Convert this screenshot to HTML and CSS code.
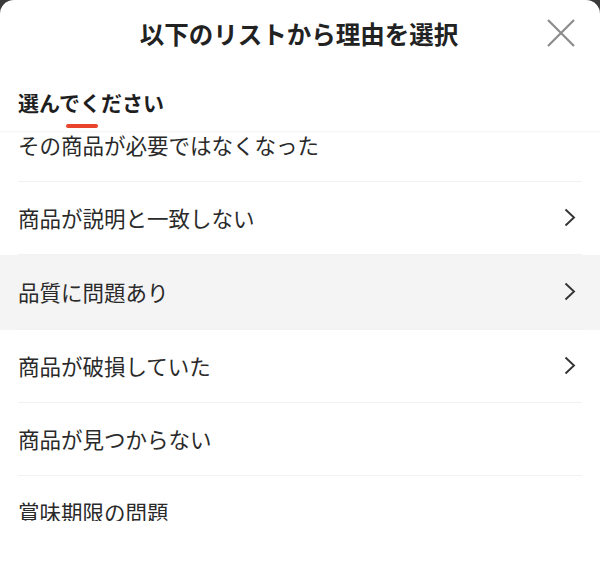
FILE: index.html
```
<html>

<head>
    <meta charset="UTF-8">
    <meta name="viewport" content="width=device-width, initial-scale=1.0">
    <link rel="stylesheet" href="styles.css">
</head>

<body>
    <div class="sheet">
        <div class="header">
            <div class="title">以下のリストから理由を選択</div>
            <span class="close">
                <svg width="30" height="30" viewBox="0 0 30 30">
                    <path d="M2 2 L28 28 M28 2 L2 28" stroke="#8c8c8c" stroke-width="2.2" fill="none" />
                </svg>
            </span>
        </div>
        <div class="tabs">
            <div class="tab active">選んでください</div>
        </div>
        <div class="list-wrap">
            <ul class="reasons">
                <li>その商品が必要ではなくなった</li>
                <li>商品が説明と一致しない
                    <svg class="chevron" width="12" height="19" viewBox="0 0 12 19">
                        <path d="M1.5 1.5 L10 9.5 L1.5 17.5" stroke="#333" stroke-width="1.9" fill="none" />
                    </svg>
                </li>
                <li class="hover">品質に問題あり
                    <svg class="chevron" width="12" height="19" viewBox="0 0 12 19">
                        <path d="M1.5 1.5 L10 9.5 L1.5 17.5" stroke="#333" stroke-width="1.9" fill="none" />
                    </svg>
                </li>
                <li>商品が破損していた
                    <svg class="chevron" width="12" height="19" viewBox="0 0 12 19">
                        <path d="M1.5 1.5 L10 9.5 L1.5 17.5" stroke="#333" stroke-width="1.9" fill="none" />
                    </svg>
                </li>
                <li>商品が見つからない</li>
                <li>賞味期限の問題</li>
            </ul>
        </div>
    </div>
</body>

</html>
```

FILE: styles.css
```
body {
    margin: 0;
    background-color: #3a3a3a;
    font-family: 'Noto Sans CJK JP', 'Noto Sans', sans-serif;
    color: #222;
}

.sheet {
    height: 561px;
    background-color: #fff;
    border-radius: 14px 14px 0 0;
    overflow: hidden;
}

.header {
    height: 66px;
    display: flex;
    align-items: center;
    justify-content: center;
    position: relative;
}

.title {
    font-size: 24.5px;
    font-weight: bold;
    color: #222;
    margin-left: -2px;
}

.close {
    position: absolute;
    right: 24px;
    top: 18px;
    width: 30px;
    height: 30px;
}

.tabs {
    height: 65px;
    padding: 0 18px;
    display: flex;
    align-items: flex-start;
    box-shadow: 0 1px 2px rgba(0, 0, 0, 0.05);
    position: relative;
    z-index: 1;
}

.tab {
    position: relative;
    font-size: 21px;
    font-weight: bold;
    line-height: 30px;
    padding-top: 21px;
    color: #1e1e1e;
}

.tab.active::after {
    content: '';
    position: absolute;
    left: 48px;
    top: 58px;
    width: 32px;
    height: 4px;
    border-radius: 2px;
    background-color: #e8452c;
}

.list-wrap {
    height: 390px;
    overflow: hidden;
}

ul.reasons {
    list-style: none;
    margin: -22px 0 0 0;
    padding: 0;
}

ul.reasons li {
    box-sizing: border-box;
    height: 73px;
    padding: 0 18px 3px 18px;
    display: flex;
    align-items: center;
    justify-content: space-between;
    font-size: 21.5px;
    color: #2a2a2a;
    position: relative;
}

ul.reasons li::before {
    content: '';
    position: absolute;
    left: 18px;
    right: 18px;
    bottom: 0;
    height: 1px;
    background-color: #f2f2f2;
}

ul.reasons li.hover {
    height: 75px;
    background-color: #f4f4f4;
}

.chevron {
    margin-right: 6px;
}
```
